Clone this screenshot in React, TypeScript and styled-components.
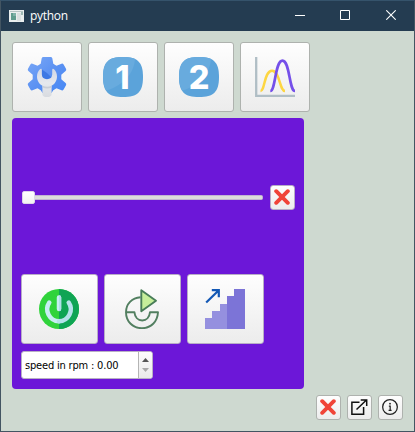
import React from "react";
import styled, { createGlobalStyle } from "styled-components";

const GlobalStyle = createGlobalStyle`
  * { box-sizing: border-box; }
  body { margin: 0; overflow: hidden; }
  button { margin: 0; padding: 0; font: inherit; }
  svg { display: block; flex: none; }
`;

const Window = styled.div`
  width: 415px;
  height: 432px;
  display: flex;
  flex-direction: column;
  border: 1px solid #435562;
  border-top-color: #35536b;
  background: #ced9d0;
`;

const TitleBar = styled.header`
  height: 30px;
  flex: none;
  display: flex;
  align-items: center;
  padding-left: 8px;
  background: #243c51;
  color: #fff;
`;

const Title = styled.span`
  flex: 1;
  margin-left: 6px;
  font: 12px/16px "Open Sans", sans-serif;
  letter-spacing: -0.3px;
`;

const WindowControl = styled.button<{ $w: number }>`
  width: ${(p) => p.$w}px;
  height: 30px;
  display: grid;
  place-items: center;
  padding-bottom: 2px;
  border: 0;
  background: transparent;
`;

const Content = styled.main`
  flex: 1;
  display: flex;
  flex-direction: column;
  padding: 11px;
`;

const Row = styled.div<{ $end?: boolean; $top?: number }>`
  display: flex;
  gap: 6px;
  margin-top: ${(p) => p.$top ?? 0}px;
  justify-content: ${(p) => (p.$end ? "flex-end" : "flex-start")};
`;

const PushButton = styled.button<{ $w: number; $h: number }>`
  width: ${(p) => p.$w}px;
  height: ${(p) => p.$h}px;
  flex: none;
  display: flex;
  align-items: center;
  justify-content: center;
  padding: 0 ${(p) => p.$w % 2}px ${(p) => p.$h % 2}px 0;
  border: 1px solid #aeb2ae;
  border-radius: 3px;
  background: linear-gradient(#fefefe, #ececec);
`;

const Panel = styled.section`
  width: 292px;
  height: 271px;
  margin-top: 6px;
  padding: 67px 9px 10px;
  display: flex;
  flex-direction: column;
  border-radius: 4px;
  background: #6c17d8;
  ${PushButton} { border-color: #b8adc6; }
`;

const SliderRow = styled.div`
  height: 25px;
  display: flex;
  align-items: center;
  padding-left: 1px;
`;

const Handle = styled.div`
  width: 13px;
  height: 13px;
  border: 1px solid #ddd5e8;
  border-radius: 2px;
  background: linear-gradient(#fff, #f2f2f2);
`;

const Groove = styled.div`
  width: 228px;
  height: 5px;
  margin-right: 7px;
  border: 1px solid #c2b4d2;
  border-left: 0;
  border-radius: 0 2px 2px 0;
  background: #dcdcdc;
`;

const SpinBox = styled.div`
  width: 132px;
  height: 28px;
  margin-top: 7px;
  display: flex;
  overflow: hidden;
  border: 1px solid #b8b0c4;
  border-radius: 3px;
  background: #fff;
`;

const SpinText = styled.span`
  flex: 1;
  padding-left: 3px;
  color: #000;
  white-space: nowrap;
  font: 11px/28px "DejaVu Sans Condensed", "DejaVu Sans", sans-serif;
  font-stretch: condensed;
  letter-spacing: -0.18px;
`;

const Stepper = styled.div`
  width: 14px;
  display: flex;
  flex-direction: column;
  align-items: center;
  justify-content: space-between;
  padding: 6px 0;
  border-left: 1px solid #b4b4b4;
  background: linear-gradient(#fdfdfd, #eaeaea);
`;

const AppIcon = () => (
  <svg width="15" height="12" viewBox="0 0 15 12">
    <path fill="#e9eeee" d="M0 0h15v12H0z" />
    <path fill="#b5c4c4" d="M1 1h13v1H1z" />
    <path fill="#5f9c8e" d="M2 3h5v7H2z" />
    <path fill="#7fb3a8" d="M4 3h3v3H4z" />
    <path fill="#d9e0e0" d="M8 3h4v8H8z" />
    <path fill="#9cb8b4" d="M12 2h2v3h-2z" />
  </svg>
);

const GearIcon = () => (
  <svg width="40" height="40" viewBox="0 0 40 40">
    <defs>
      <linearGradient id="gear" gradientUnits="userSpaceOnUse" x1="4" y1="2" x2="36" y2="38">
        <stop offset="0" stopColor="#76a5f6" />
        <stop offset="0.5" stopColor="#5b91f2" />
        <stop offset="1" stopColor="#4688f5" />
      </linearGradient>
      <linearGradient id="wrench" x1="0" y1="0" x2="0" y2="1">
        <stop offset="0" stopColor="#d0d7e6" />
        <stop offset="0.5" stopColor="#e6e8ed" />
        <stop offset="1" stopColor="#d8dbe0" />
      </linearGradient>
    </defs>
    <path
      fill="url(#gear)"
      d="M16.500 0h7q1.500 0 1.800 1.300L26.300 6.700l3.200 2 5-2q1.300-.5 2.100.8l2.400 4.300q.7 1.300-.4 2.200L34.300 17.800v4.400l4.300 3.800q1.100.9.4 2.200l-2.400 4.300q-.8 1.300-2.100.8l-5-2-3.200 2L24.500 36h-9L13.700 33.300l-3.200-2-5 2q-1.300.5-2.100-.8L1 28.200q-.7-1.300.4-2.200l4.300-3.800v-4.400L1.400 14Q.3 13.100 1 11.800l2.400-4.300q.8-1.300 2.100-.8l5 2 3.200-2L14.700 1.300Q15 0 16.500 0z"
    />
    <path fill="#3d78e4" d="M15 12.500 20 16l5 5-5 2-5-2.500z" />
    <path
      fill="url(#wrench)"
      d="M13.200 12q1.500-.9 1.600.8v4.800q.4 4.600 5.200 4.600t5.200-4.600v-4.800q.1-1.700 1.600-.8c2 1.600 3.200 4.300 3.200 7.500 0 4.200-2.200 7.500-5.400 9.200V37.200q0 2.800-4.600 2.800t-4.600-2.800v-8.500c-3.200-1.700-5.400-5-5.400-9.200 0-3.200 1.200-5.900 3.200-7.500z"
    />
    <path fill="#c8cdd6" d="M15.600 28.800q4.500 2 9 0v1.700q-4.500 2-9 0z" />
  </svg>
);

const NumberIcon = ({ value }: { value: number }) => (
  <svg width="40" height="40" viewBox="0 0 40 40">
    <path
      fill="#5ba3da"
      d="M20 0c14.500 0 20 5 20 20s-5.500 20-20 20S0 35 0 20 5.500 0 20 0z"
    />
    <path
      fill="#68abde"
      d="M20 0c5 0 9 .6 12 2-1 14-11 26-28.500 31.500C1.200 30.400 0 26 0 20 0 5 5.500 0 20 0z"
    />
    <text
      x={value === 1 ? 19.5 : 20}
      y="32"
      textAnchor="middle"
      fill="#fff"
      fontFamily="Inter, sans-serif"
      fontWeight="800"
      fontSize="32.500"
    >
      {value}
    </text>
  </svg>
);

const CurvesIcon = () => (
  <svg width="40" height="40" viewBox="0 0 40 40" fill="none">
    <path stroke="#b0bec5" strokeWidth="2.300" d="M1.200 0v38.800H40" />
    <path
      stroke="#fdd642"
      strokeWidth="2.500"
      d="M5.500 34C10 34 9 13.800 17 13.800S24.500 34 30 34"
    />
    <path
      stroke="#7550e9"
      strokeWidth="2.700"
      d="M15.300 34C20.500 34 20 3.700 27.500 3.700S34 34 40 34"
    />
  </svg>
);

const CrossIcon = () => (
  <svg width="16" height="16" viewBox="0 0 16 16">
    <path
      d="m2.200 2.200 11.600 11.600m0-11.600L2.200 13.800"
      stroke="#f04438"
      strokeWidth="3.900"
      strokeLinecap="round"
    />
  </svg>
);

const PowerIcon = () => (
  <svg width="40" height="40" viewBox="0 0 40 40">
    <circle cx="20" cy="20" r="20" fill="#30d33b" />
    <path fill="#0fa454" d="M20 0a20 20 0 0 1 0 40z" />
    <g fill="none" strokeWidth="4.500" strokeLinecap="round">
      <path stroke="#c8edf3" d="M20 32.200A12 12 0 0 1 10.300 13.500M20 8.500v11.500" />
      <path stroke="#b5e2ea" d="M29.700 13.500A12 12 0 0 1 20 32.200" />
    </g>
    <path fill="#b0dfe8" d="M20 6.300a2.200 2.200 0 0 1 2.200 2.200V20a2.200 2.200 0 0 1-2.200 2.200z" />
  </svg>
);

const RotateIcon = () => (
  <svg width="40" height="40" viewBox="0 0 40 40" strokeLinejoin="round">
    <path
      fill="none"
      stroke="#527f60"
      strokeWidth="1.900"
      d="M18.500 8.200C9.800 8.700 4 15 4 23.200h8.400c.5 5 3.500 8.300 7.800 8.300s7.300-3.300 7.800-8.300h8c-.5 9.500-7 16-16 16S4 32.700 4 23.200"
    />
    <path fill="#c5ee9a" stroke="#487d58" strokeWidth="1.900" d="M19.300 1.200 34 11.700 19.300 22.300z" />
  </svg>
);

const StairsIcon = () => (
  <svg width="40" height="40" viewBox="0 0 40 40">
    <path fill="#9590df" d="M0 40V29h7v-7h8v-7h7v25z" />
    <path fill="#7c74d7" d="M22 40V7h7V0h11v40z" />
    <path fill="none" stroke="#1358b5" strokeWidth="2.200" d="M1.200 13.500 13.800 1.200M6.800 1.200h7v7" />
  </svg>
);

const PopOutIcon = () => (
  <svg width="17" height="16" viewBox="0 0 17 16" fill="none" stroke="#111" strokeWidth="1.500">
    <path d="M8.500 3.300H.9v11.900h11.700V8M5.500 10.500l9.700-9.200M9.700 1h6v6" />
  </svg>
);

const InfoIcon = () => (
  <svg width="16" height="16" viewBox="0 0 17 17">
    <circle cx="8.500" cy="8.500" r="7.800" fill="none" stroke="#222" strokeWidth="1.350" />
    <circle cx="8.500" cy="5" r=".95" fill="#222" />
    <path fill="none" stroke="#222" strokeWidth="1.300" d="M7.300 7.500h1.400v4.400M7 12h3.200" />
  </svg>
);

const ArrowIcon = ({ down }: { down?: boolean }) => (
  <svg width="7" height="4" viewBox="0 0 7 4">
    <path fill={down ? "#aaa" : "#555"} d={down ? "M0 0h7L3.500 4z" : "M0 4h7L3.500 0z"} />
  </svg>
);

export default function App() {
  return (
    <>
      <GlobalStyle />
      <Window>
        <TitleBar>
          <AppIcon />
          <Title>python</Title>
          <WindowControl $w={44} aria-label="Minimize">
            <svg width="10" height="10"><path fill="#fff" d="M0 5h10v1H0z" /></svg>
          </WindowControl>
          <WindowControl $w={46} aria-label="Maximize">
            <svg width="10" height="10"><path d="M.5.5h9v9h-9z" fill="none" stroke="#fff" /></svg>
          </WindowControl>
          <WindowControl $w={46} aria-label="Close">
            <svg width="10" height="10"><path d="m.3.3 9.400 9.400m0-9.400L.3 9.700" stroke="#fff" strokeWidth="1.100" /></svg>
          </WindowControl>
        </TitleBar>
        <Content>
          <Row>
            <PushButton $w={70} $h={70} aria-label="Settings"><GearIcon /></PushButton>
            <PushButton $w={70} $h={70}><NumberIcon value={1} /></PushButton>
            <PushButton $w={70} $h={70}><NumberIcon value={2} /></PushButton>
            <PushButton $w={70} $h={70} aria-label="Curves"><CurvesIcon /></PushButton>
          </Row>
          <Panel>
            <SliderRow>
              <Handle />
              <Groove />
              <PushButton $w={25} $h={25} aria-label="Reset"><CrossIcon /></PushButton>
            </SliderRow>
            <Row $top={64}>
              <PushButton $w={77} $h={70} aria-label="Power"><PowerIcon /></PushButton>
              <PushButton $w={77} $h={70} aria-label="Rotate"><RotateIcon /></PushButton>
              <PushButton $w={77} $h={70} aria-label="Steps"><StairsIcon /></PushButton>
            </Row>
            <SpinBox>
              <SpinText>speed in rpm : 0.00</SpinText>
              <Stepper>
                <ArrowIcon />
                <ArrowIcon down />
              </Stepper>
            </SpinBox>
          </Panel>
          <Row $end $top={6}>
            <PushButton $w={25} $h={25} aria-label="Close"><CrossIcon /></PushButton>
            <PushButton $w={25} $h={25} aria-label="Pop out"><PopOutIcon /></PushButton>
            <PushButton $w={25} $h={25} aria-label="Info"><InfoIcon /></PushButton>
          </Row>
        </Content>
      </Window>
    </>
  );
}
